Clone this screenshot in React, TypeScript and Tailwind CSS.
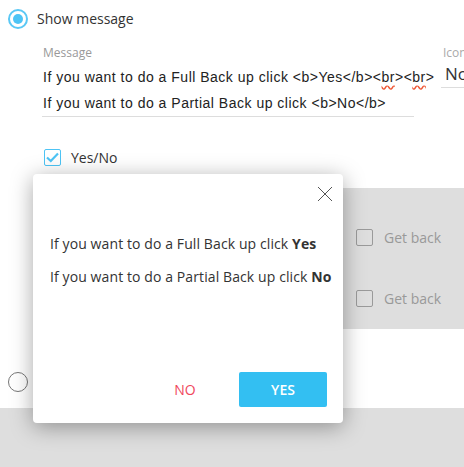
import { useState } from 'react';

function Radio({ checked }: { checked?: boolean }) {
  return (
    <span
      className={`flex h-[20px] w-[20px] shrink-0 items-center justify-center rounded-full border ${
        checked ? 'border-[#5ac8f5] border-2' : 'border-[#777]'
      }`}
    >
      {checked && <span className="h-[10px] w-[10px] rounded-full bg-[#4dc4f5]" />}
    </span>
  );
}

function Check({ checked }: { checked?: boolean }) {
  return (
    <span
      className={`flex h-[17px] w-[17px] shrink-0 items-center justify-center rounded-[2px] border ${
        checked ? 'border-[#4dc4f5]' : 'border-[#9a9a9a]'
      }`}
    >
      {checked && (
        <svg width="13" height="11" viewBox="0 0 13 11" fill="none">
          <path d="M1 5.5 L4.8 9 L12 1.5" stroke="#4dc4f5" strokeWidth="2.2" />
        </svg>
      )}
    </span>
  );
}

export default function App() {
  const [open] = useState(true);
  const sans = { fontFamily: '"Open Sans", sans-serif' };

  return (
    <div className="relative h-[467px] w-[464px] overflow-hidden bg-white" style={sans}>
      {/* Show message */}
      <div className="flex items-center gap-[9px] pl-[8px] pt-[8px]">
        <Radio checked />
        <span className="text-[14px] text-[#333]">Show message</span>
      </div>

      {/* Message + Icon fields */}
      <div className="mt-[16px] flex gap-[27px] pl-[42px]">
        <div className="w-[372px] shrink-0 border-b border-[#ddd]">
          <div className="pl-[1px] text-[12px] leading-[16px] text-[#999]">Message</div>
          <div
            className="mt-[3px] whitespace-nowrap pl-[1px] text-[14px] tracking-[0.5px] leading-[26px] text-[#222]"
            style={{ fontFamily: '"Liberation Sans", Arial, sans-serif' }}
          >
            <div>
              If you want to do a Full Back up click &lt;b&gt;Yes&lt;/b&gt;&lt;
              <span className="underline decoration-wavy decoration-[#e53] underline-offset-[3px]">br</span>&gt;&lt;
              <span className="underline decoration-wavy decoration-[#e53] underline-offset-[3px]">br</span>&gt;
            </div>
            <div>If you want to do a Partial Back up click &lt;b&gt;No&lt;/b&gt;</div>
          </div>
        </div>
        <div className="w-[60px] shrink-0 self-start border-b border-[#ddd]">
          <div className="pl-[2px] text-[12px] leading-[16px] text-[#aaa]">Icon</div>
          <div className="pl-[4px] text-[17px] leading-[26px] text-[#333]">No</div>
        </div>
      </div>

      {/* Yes/No */}
      <div className="mt-[30px] flex items-center gap-[10px] pl-[44px]">
        <Check checked />
        <span className="text-[14px] text-[#333]">Yes/No</span>
      </div>

      {/* Gray panel */}
      <div className="ml-[40px] mt-[20px] flex h-[141px] flex-col gap-[40px] bg-[#dedede] pl-[316px] pt-[39px]">
        <div className="flex items-center gap-[11px]">
          <Check />
          <span className="text-[14px] text-[#999]">Get back</span>
        </div>
        <div className="flex items-center gap-[11px]">
          <Check />
          <span className="text-[14px] text-[#999]">Get back</span>
        </div>
      </div>

      {/* Second radio */}
      <div className="mt-[43px] pl-[8px]">
        <Radio />
      </div>

      {/* Bottom gray */}
      <div className="mt-[16px] h-[60px] bg-[#dedede]" />

      {/* Modal */}
      {open && (
        <div className="absolute left-[33px] top-[174px] flex h-[249px] w-[310px] flex-col rounded-[4px] bg-white shadow-[0_4px_22px_rgba(0,0,0,0.35)]">
          <div className="flex justify-end pr-[10px] pt-[12px]">
            <svg width="16" height="16" viewBox="0 0 16 16">
              <path d="M1 1 L15 15 M15 1 L1 15" stroke="#555" strokeWidth="1" />
            </svg>
          </div>
          <div className="mt-[25px] pl-[17px] text-[14px] tracking-[0.1px] leading-[33px] text-[#333]">
            <div>
              If you want to do a Full Back up click <b>Yes</b>
            </div>
            <div>
              If you want to do a Partial Back up click <b>No</b>
            </div>
          </div>
          <div className="mt-auto flex items-center justify-end gap-[10px] pb-[16px] pr-[16px]">
            <button className="h-[35px] w-[88px] text-[14px] text-[#f0475c]">NO</button>
            <button className="h-[35px] w-[88px] rounded-[2px] bg-[#33bff2] text-[14px] font-semibold text-white">
              YES
            </button>
          </div>
        </div>
      )}
    </div>
  );
}
